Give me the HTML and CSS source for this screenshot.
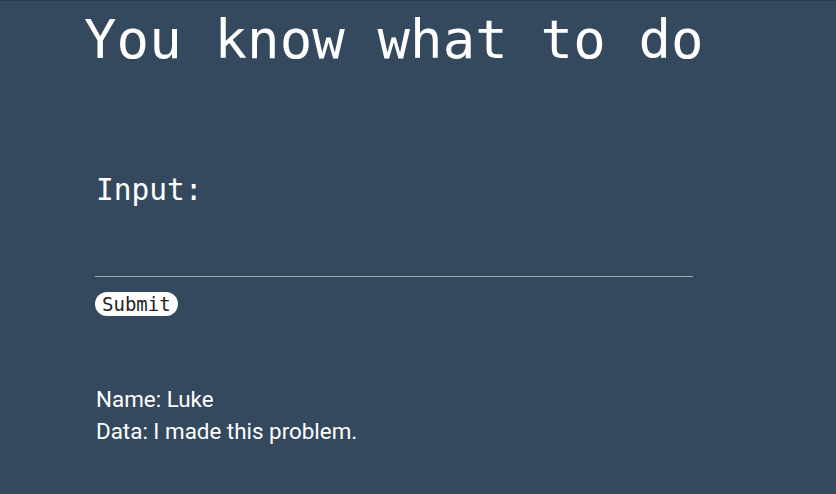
FILE: index.html
```html
<!DOCTYPE html>
<html>
<head>
<meta charset="utf-8">
<link rel="stylesheet" href="styles.css">
</head>
<body>
<div class="page">
  <h1 class="title">You know what to do</h1>
  <form class="form">
    <label class="label" for="inp">Input:</label>
    <input class="field" id="inp" type="text">
    <button class="submit" type="button">Submit</button>
  </form>
  <div class="info">
    <p class="line">Name: Luke</p>
    <p class="line">Data: I made this problem.</p>
  </div>
</div>
</body>
</html>
```
FILE: styles.css
```css
html, body {
  margin: 0;
  padding: 0;
  height: 100%;
}
body {
  background: #34495e;
  border-top: 1px solid #2b3c4e;
  box-sizing: border-box;
  color: #ffffff;
}
.page {
  display: flex;
  flex-direction: column;
}
.title {
  margin: 0 0 0 84px;
  font-family: "DejaVu Sans Mono", monospace;
  font-weight: normal;
  font-size: 54px;
  line-height: 78px;
  letter-spacing: 0.1px;
}
.form {
  display: flex;
  flex-direction: column;
  align-items: flex-start;
  margin: 93px 0 0 95px;
}
.label {
  font-family: "DejaVu Sans Mono", monospace;
  font-size: 29.5px;
  line-height: 36px;
  padding-left: 1px;
}
.field {
  width: 598px;
  height: 40px;
  margin-top: 29px;
  padding: 0;
  border: none;
  border-bottom: 1px solid #a3abb4;
  background: transparent;
  color: #fff;
  outline: none;
  box-sizing: border-box;
}
.submit {
  margin-top: 15px;
  height: 24px;
  padding: 0 7px;
  border: none;
  border-radius: 12px;
  background: #ffffff;
  color: #222;
  font-family: "DejaVu Sans Mono", monospace;
  font-size: 19px;
  line-height: 24px;
}
.info {
  margin: 67px 0 0 96px;
  font-family: Roboto, sans-serif;
  font-size: 22.4px;
}
.line {
  margin: 0;
  line-height: 32px;
}
```
